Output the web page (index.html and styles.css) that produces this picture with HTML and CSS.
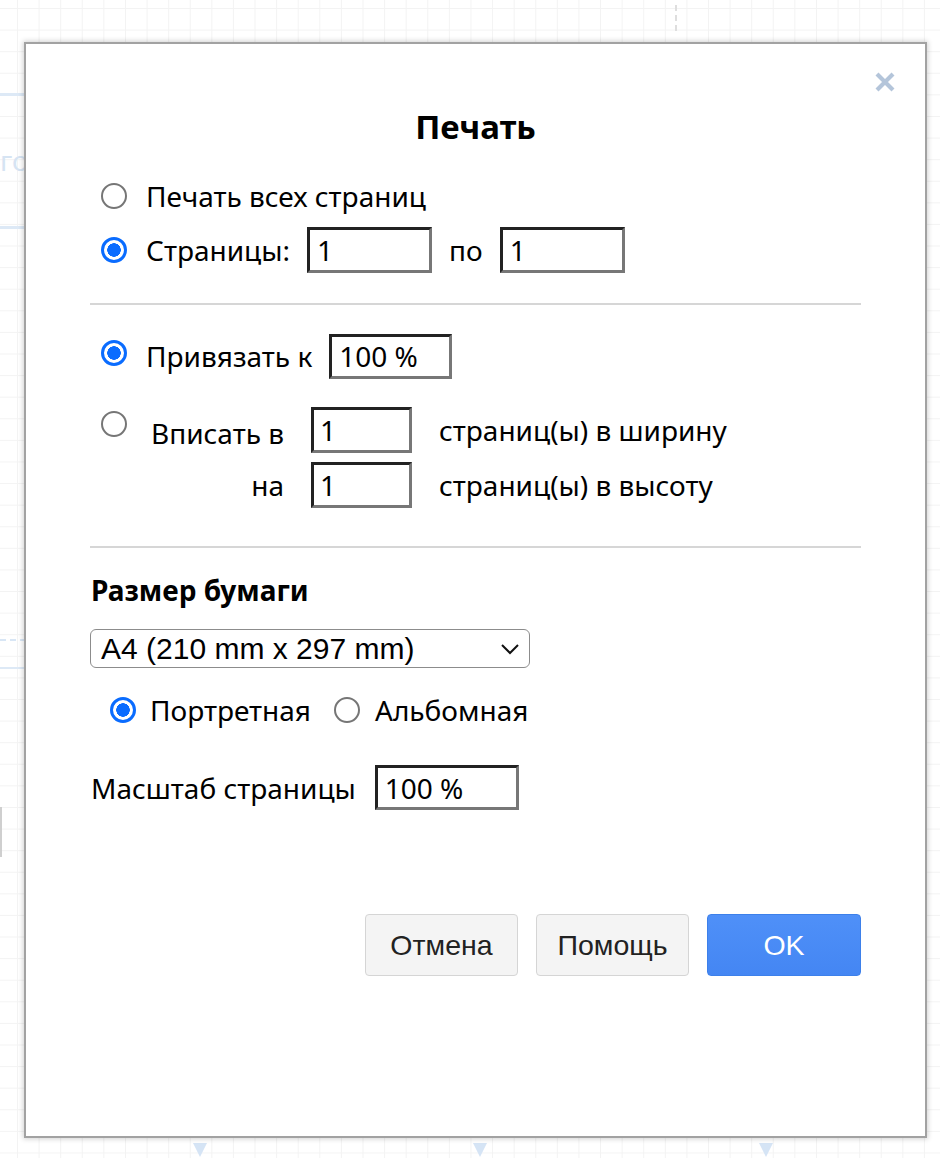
FILE: index.html
```html
<!DOCTYPE html>
<html lang="ru">
<head>
<meta charset="utf-8">
<title>Печать</title>
<link rel="stylesheet" href="styles.css">
</head>
<body>
<div class="canvas">
  <div class="deco deco-line deco-a"></div>
  <div class="deco deco-line deco-b"></div>
  <div class="deco deco-text">го</div>
  <div class="deco deco-dash"></div>
  <div class="deco deco-line deco-c"></div>
  <div class="deco deco-bar"></div>
  <div class="deco deco-vdash"></div>
  <div class="deco deco-arrow arrow-1"></div>
  <div class="deco deco-arrow arrow-2"></div>
  <div class="deco deco-arrow arrow-3"></div>

  <div class="dialog">
    <button class="close" type="button" aria-label="Закрыть">
      <svg width="22" height="22" viewBox="0 0 22 22"><path d="M3 3 L19 19 M19 3 L3 19" stroke="#b4c5da" stroke-width="4.2" stroke-linecap="butt"/></svg>
    </button>

    <h1 class="title">Печать</h1>

    <div class="row row-all">
      <input type="radio" name="pages" class="radio">
      <span class="label">Печать всех страниц</span>
    </div>
    <div class="row row-range">
      <input type="radio" name="pages" class="radio" checked>
      <span class="label">Страницы:</span>
      <input class="field field-page" type="text" value="1">
      <span class="label">по</span>
      <input class="field field-page" type="text" value="1">
    </div>

    <hr class="sep sep-1">

    <div class="row row-bind">
      <input type="radio" name="scale" class="radio radio-up" checked>
      <span class="label">Привязать к</span>
      <input class="field field-bind" type="text" value="100 %">
    </div>

    <div class="fit">
      <input type="radio" name="scale" class="radio fit-radio">
      <div class="fit-grid">
        <span class="label fit-label fit-label-first">Вписать в</span>
        <input class="field field-fit" type="text" value="1">
        <span class="label">страниц(ы) в ширину</span>
        <span class="label fit-label">на</span>
        <input class="field field-fit" type="text" value="1">
        <span class="label">страниц(ы) в высоту</span>
      </div>
    </div>

    <hr class="sep sep-2">

    <h2 class="subtitle">Размер бумаги</h2>

    <div class="select-wrap">
      <select class="paper">
        <option>A4 (210 mm x 297 mm)</option>
      </select>
      <svg class="chevron" width="20" height="12" viewBox="0 0 20 12"><path d="M2 2 L10 10 L18 2" fill="none" stroke="#111" stroke-width="2"/></svg>
    </div>

    <div class="row orient">
      <input type="radio" name="orient" class="radio" checked>
      <span class="label">Портретная</span>
      <input type="radio" name="orient" class="radio radio-land">
      <span class="label">Альбомная</span>
    </div>

    <div class="row row-zoom">
      <span class="label">Масштаб страницы</span>
      <input class="field field-zoom" type="text" value="100 %">
    </div>

    <div class="buttons">
      <button class="btn" type="button">Отмена</button>
      <button class="btn" type="button">Помощь</button>
      <button class="btn btn-primary" type="button">OK</button>
    </div>
  </div>
</div>
</body>
</html>
```

FILE: styles.css
```css
html, body {
  margin: 0;
  padding: 0;
}

body {
  width: 940px;
  height: 1158px;
  overflow: hidden;
  background-color: #ffffff;
  background-image:
    linear-gradient(to right, #f3f3f3 1px, transparent 1px),
    linear-gradient(to bottom, #f3f3f3 1px, transparent 1px);
  background-size: 21.6px 21.6px;
  background-position: 17px 8px;
  font-family: "Noto Sans", "Open Sans", sans-serif;
  color: #000;
}

.canvas {
  position: relative;
  width: 940px;
  height: 1158px;
}

/* faint diagram content behind the dialog */
.deco { position: absolute; }
.deco-line { height: 3px; background: #dde9f6; }
.deco-a { left: 0; top: 93px; width: 30px; }
.deco-b { left: 0; top: 226px; width: 30px; }
.deco-c { left: 0; top: 667px; width: 30px; height: 2px; }
.deco-text {
  left: 0; top: 142px;
  font-size: 28px; line-height: 36px; color: #d6e4f3;
}
.deco-dash {
  left: 0; top: 639px; width: 24px; height: 2px;
  background: repeating-linear-gradient(to right, #d8e6f5 0 6px, transparent 6px 10px);
}
.deco-bar { left: 0; top: 807px; width: 2px; height: 50px; background: #cfcfcf; }
.deco-vdash {
  left: 675px; top: 5px; width: 2px; height: 30px;
  background: repeating-linear-gradient(to bottom, #dedede 0 6px, transparent 6px 10px);
}
.deco-arrow {
  top: 1143px; width: 0; height: 0;
  border-left: 7px solid transparent;
  border-right: 7px solid transparent;
  border-top: 14px solid #d5e4f5;
}
.arrow-1 { left: 193px; }
.arrow-2 { left: 473px; }
.arrow-3 { left: 759px; }

/* dialog */
.dialog {
  position: absolute;
  left: 24px;
  top: 42px;
  box-sizing: content-box;
  background: #fff;
  border: 2px solid #a2a2a2;
  box-shadow: 0 0 5px 1px rgba(0, 0, 0, 0.18);
  padding: 63px 64px 0 64px;
  width: 771px;
  height: 1029px;
  display: flex;
  flex-direction: column;
}

.close {
  position: absolute;
  right: 29px;
  top: 27px;
  width: 22px;
  height: 22px;
  padding: 0;
  border: 0;
  background: transparent;
  display: flex;
}

.title {
  margin: 0;
  height: 40px;
  line-height: 40px;
  text-align: center;
  font-size: 33px;
  font-weight: 700;
}

.row {
  display: flex;
  align-items: center;
}

.label {
  font-size: 28px;
  line-height: 36px;
  white-space: nowrap;
}

.radio {
  -webkit-appearance: none;
  appearance: none;
  box-sizing: border-box;
  width: 26px;
  height: 26px;
  margin: 0 19px 0 11px;
  border: 2px solid #767676;
  border-radius: 50%;
  background: #fff;
  flex: none;
}

.radio:checked {
  border: 3px solid #0a6cff;
  background: radial-gradient(circle, #0a6cff 0 6.5px, #fff 7px);
}

.row-all { height: 40px; margin-top: 29px; }
.row-range { height: 46px; margin-top: 11px; }

.field {
  box-sizing: border-box;
  height: 46px;
  margin: 0;
  padding: 0 0 0 7px;
  border: 3px solid;
  border-color: #222 #777 #777 #222;
  background: #fff;
  font-family: "Noto Sans", "Open Sans", sans-serif;
  font-size: 28px;
  color: #000;
  outline: none;
}

.field-page { width: 125px; }
.row-range .label + .field-page { margin-left: 17px; }
.row-range .field-page + .label { margin-left: 17px; }

.sep {
  height: 2px;
  border: 0;
  margin: 0;
  background: #d6d6d6;
  flex: none;
}
.sep-1 { margin-top: 30px; }
.sep-2 { margin-top: 38px; }

.row-bind { height: 46px; margin-top: 28px; }
.field-bind { width: 123px; height: 45px; margin-left: 17px; }
.radio-up { margin-bottom: 6px; }

.fit {
  display: flex;
  align-items: flex-start;
  margin-top: 28px;
}
.fit-radio { margin-top: 4px; margin-right: 0; }
.fit-grid {
  display: grid;
  grid-template-columns: 157px 101px auto;
  grid-auto-rows: 46px;
  column-gap: 27px;
  row-gap: 9px;
  align-items: center;
}
.fit-label { text-align: right; }
.fit-label-first { padding-top: 6px; }
.field-fit { width: 101px; padding-left: 6px; }

.subtitle {
  margin: 24px 0 0 1px;
  height: 36px;
  line-height: 36px;
  font-size: 28px;
  font-weight: 700;
}

.select-wrap {
  position: relative;
  margin-top: 21px;
  width: 440px;
  height: 39px;
}
.paper {
  -webkit-appearance: none;
  appearance: none;
  box-sizing: border-box;
  width: 440px;
  height: 39px;
  margin: 0;
  padding: 0 0 0 10px;
  border: 1.5px solid #8c8c8c;
  border-radius: 6px;
  background: #fff;
  font-family: "Liberation Sans", Arial, sans-serif;
  font-size: 30px;
  color: #000;
}
.chevron {
  position: absolute;
  right: 10px;
  top: 14px;
  pointer-events: none;
}

.orient { height: 40px; margin-top: 22px; }
.orient .radio { margin: 0 14px 0 20px; }
.orient .radio-land { margin: 0 15px 0 23px; }

.row-zoom { height: 45px; margin-top: 35px; }
.row-zoom .label { margin-left: 1px; }
.field-zoom { width: 144px; height: 45px; margin-left: 19px; }

.buttons {
  display: flex;
  justify-content: flex-end;
  gap: 18px;
  margin-top: 104px;
}
.btn {
  box-sizing: border-box;
  width: 153px;
  height: 62px;
  margin: 0;
  padding: 0;
  border: 1px solid #d5d5d5;
  border-radius: 4px;
  background: #f4f4f4;
  font-family: "Liberation Sans", Arial, sans-serif;
  font-size: 28.5px;
  color: #222;
}
.btn-primary {
  width: 154px;
  border-color: #3d80ea;
  background: linear-gradient(#4f90f8, #4486f3);
  color: #fff;
}
```
